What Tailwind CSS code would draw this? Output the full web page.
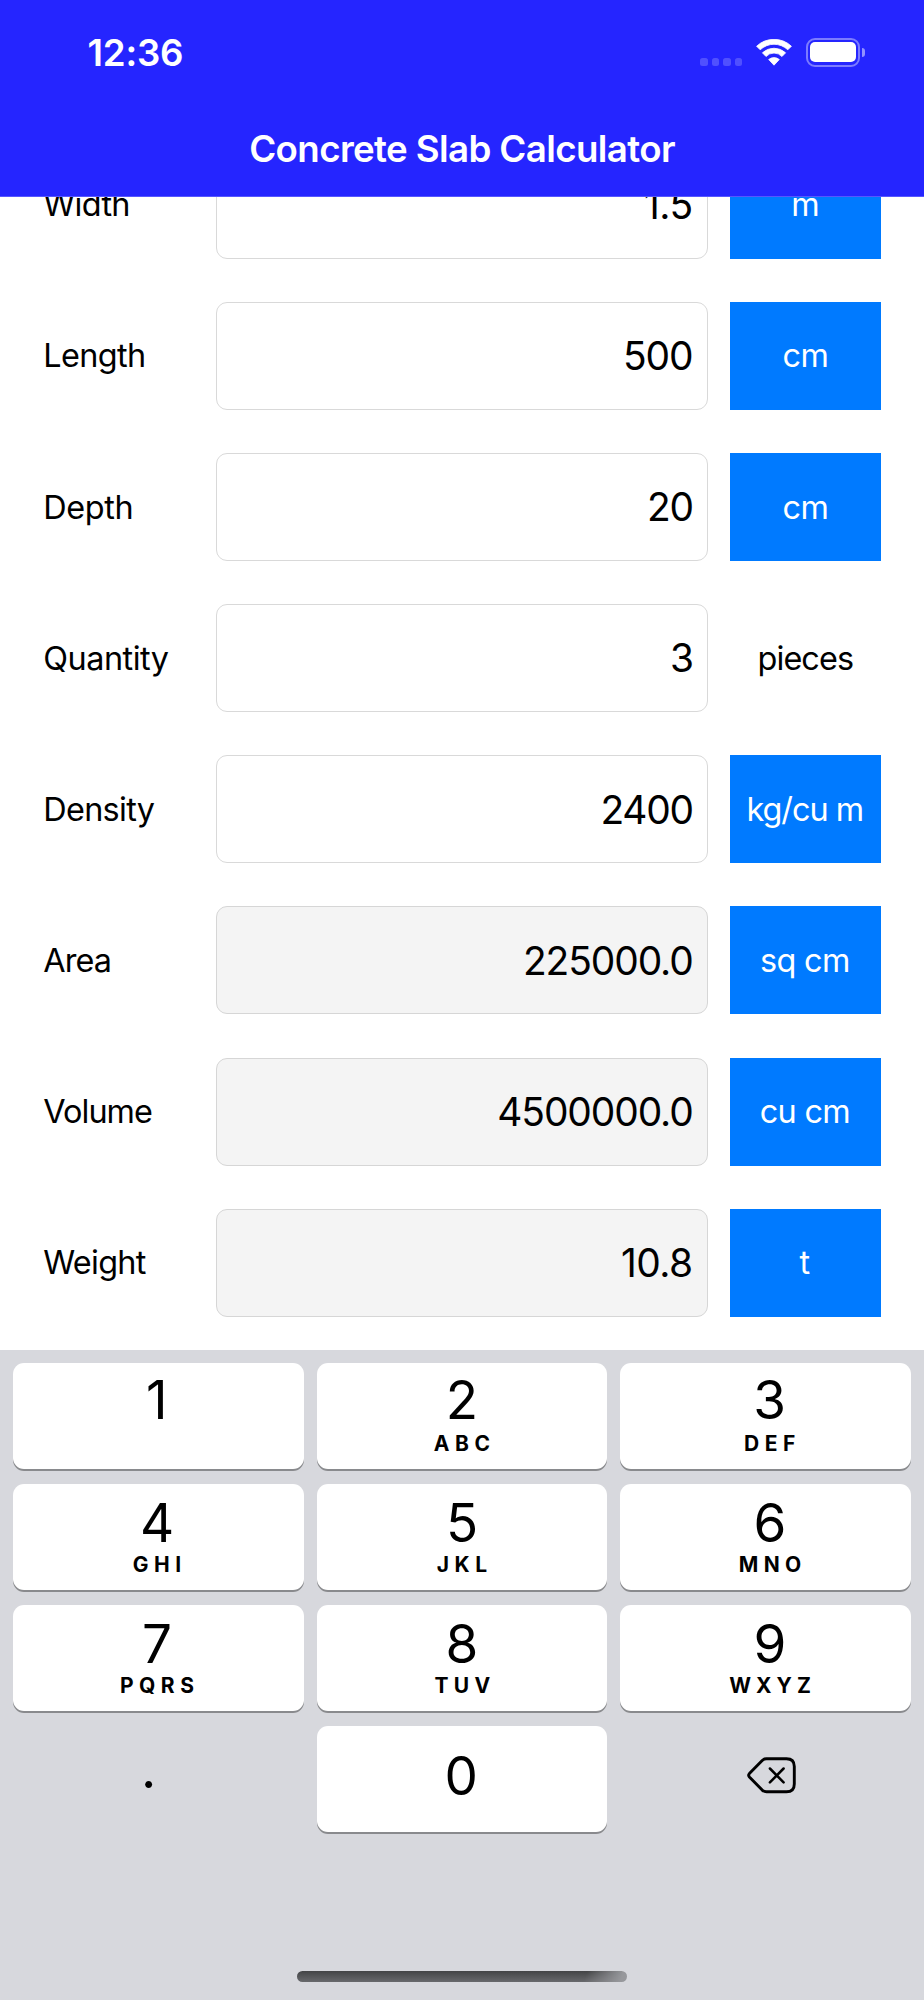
<!DOCTYPE html>
<html lang="en">
<head>
<meta charset="utf-8">
<meta name="viewport" content="width=924">
<title>Concrete Slab Calculator</title>
<script src="https://cdn.jsdelivr.net/npm/@tailwindcss/browser@4"></script>
</head>
<body class="flex h-[2000px] w-[924px] flex-col overflow-hidden bg-white font-['Inter','Liberation_Sans',sans-serif] text-black">

<header class="flex h-[197px] shrink-0 flex-col border-b border-[#5656ff] bg-[#2525ff] text-white">
  <div class="flex h-[105px] justify-between pl-[87.5px] pr-[59px]">
    <div class="pt-[30.5px] text-[36.7px] leading-[44px] font-semibold tracking-[-0.2px]">12:36</div>
    <div class="flex items-start">
      <div class="mt-[58px] flex gap-[3.8px]">
        <span class="h-2 w-[7.7px] rounded-[2.5px] bg-white/20"></span>
        <span class="h-2 w-[7.7px] rounded-[2.5px] bg-white/20"></span>
        <span class="h-2 w-[7.7px] rounded-[2.5px] bg-white/20"></span>
        <span class="h-2 w-[7.7px] rounded-[2.5px] bg-white/20"></span>
      </div>
      <svg class="mt-[39px] ml-[13.7px] h-[27px] w-9" viewBox="0 0 36 27" fill="#fff" stroke="#fff" stroke-width=".8" stroke-linejoin="round">
        <path d="M.6 7.2A25.4 25.4 0 0 1 35.4 7.2L31.8 10.8A20 20 0 0 0 4.2 10.8Z"/>
        <path d="M6.4 13.8A17 17 0 0 1 29.6 13.8L26 17.5A11 11 0 0 0 10 17.5Z"/>
        <path d="M12.7 20.5A8.4 8.4 0 0 1 23.3 20.5L18 26.2Z"/>
      </svg>
      <div class="mt-[38px] ml-3.5 h-[28.5px] w-[54px] rounded-[9px] border-2 border-white/40 p-[2.2px]">
        <div class="h-full w-full rounded-[5px] bg-white"></div>
      </div>
      <div class="mt-[48px] ml-[1.7px] h-[9px] w-[3.3px] rounded-r-full bg-white/50"></div>
    </div>
  </div>
  <h1 class="pt-[22px] text-center text-[36.7px] leading-[44px] font-semibold tracking-[-0.62px]">Concrete Slab Calculator</h1>
</header>

<main class="h-[1153px] shrink-0 overflow-hidden">
  <div class="-mt-[46.5px] flex flex-col gap-[43.2px] pr-[43.2px] pl-[43.3px] text-[32.4px]">
    <div class="flex h-[108px] items-center">
      <label class="w-[172.7px] pt-[2px] tracking-[-0.65px]">Width</label>
      <div class="flex h-full w-[492.3px] items-center justify-end rounded-[11px] border border-[#d9d9d9] pt-[1.5px] pr-[14.5px] text-[38.9px] tracking-[-0.5px]">1.5</div>
      <div class="ml-[21.7px] flex h-full w-[151px] items-center justify-center bg-[#007aff] pt-[2px] tracking-[-0.2px] text-white">m</div>
    </div>
    <div class="flex h-[108px] items-center">
      <label class="w-[172.7px] pt-[2px] tracking-[-0.6px]">Length</label>
      <div class="flex h-full w-[492.3px] items-center justify-end rounded-[11px] border border-[#d9d9d9] pt-[1px] pr-[14.5px] text-[38.9px] tracking-[-1px]">500</div>
      <div class="ml-[21.7px] flex h-full w-[151px] items-center justify-center bg-[#007aff] pt-[2px] tracking-[-0.6px] text-white">cm</div>
    </div>
    <div class="flex h-[108px] items-center">
      <label class="w-[172.7px] pt-[2px] tracking-[-0.35px]">Depth</label>
      <div class="flex h-full w-[492.3px] items-center justify-end rounded-[11px] border border-[#d9d9d9] pt-[1px] pr-[14.5px] text-[38.9px] tracking-[-1.3px]">20</div>
      <div class="ml-[21.7px] flex h-full w-[151px] items-center justify-center bg-[#007aff] pt-[2px] tracking-[-0.6px] text-white">cm</div>
    </div>
    <div class="flex h-[108px] items-center">
      <label class="w-[172.7px] pt-[2px] tracking-[-0.5px]">Quantity</label>
      <div class="flex h-full w-[492.3px] items-center justify-end rounded-[11px] border border-[#d9d9d9] pt-[1px] pr-[14.5px] text-[38.9px] tracking-[-1.3px]">3</div>
      <div class="ml-[21.7px] flex h-full w-[151px] items-center justify-center pt-[2px] tracking-[-0.9px]">pieces</div>
    </div>
    <div class="flex h-[108px] items-center">
      <label class="w-[172.7px] pt-[2px] tracking-[-0.7px]">Density</label>
      <div class="flex h-full w-[492.3px] items-center justify-end rounded-[11px] border border-[#d9d9d9] pt-[1px] pr-[14.5px] text-[38.9px] tracking-[-1.3px]">2400</div>
      <div class="ml-[21.7px] flex h-full w-[151px] items-center justify-center bg-[#007aff] pt-[2px] pr-px tracking-[-1px] text-white">kg/cu m</div>
    </div>
    <div class="flex h-[108px] items-center">
      <label class="w-[172.7px] pt-[2px] tracking-[-0.9px]">Area</label>
      <div class="flex h-full w-[492.3px] items-center justify-end rounded-[11px] border border-[#d6d6d6] bg-[#f4f4f4] pt-[1px] pr-[14.5px] text-[38.9px] tracking-[-1.1px]">225000.0</div>
      <div class="ml-[21.7px] flex h-full w-[151px] items-center justify-center bg-[#007aff] pt-[2px] pr-px tracking-[-0.65px] text-white">sq cm</div>
    </div>
    <div class="flex h-[108px] items-center">
      <label class="w-[172.7px] pt-[2px] tracking-[-0.95px]">Volume</label>
      <div class="flex h-full w-[492.3px] items-center justify-end rounded-[11px] border border-[#d6d6d6] bg-[#f4f4f4] pt-[1px] pr-[14.5px] text-[38.9px] tracking-[-1.1px]">4500000.0</div>
      <div class="ml-[21.7px] flex h-full w-[151px] items-center justify-center bg-[#007aff] pt-[2px] pr-px tracking-[-0.65px] text-white">cu cm</div>
    </div>
    <div class="flex h-[108px] items-center">
      <label class="w-[172.7px] pt-px tracking-[-0.7px]">Weight</label>
      <div class="flex h-full w-[492.3px] items-center justify-end rounded-[11px] border border-[#d6d6d6] bg-[#f4f4f4] pt-[1px] pr-[14.5px] text-[38.9px] tracking-[-0.5px]">10.8</div>
      <div class="ml-[21.7px] flex h-full w-[151px] items-center justify-center bg-[#007aff] pt-px pr-px text-white">t</div>
    </div>
  </div>
</main>

<section class="flex h-[650px] shrink-0 flex-col items-center bg-[#d7d8dd] pt-[12.8px]">
  <div class="grid grid-cols-[290.6px_290.6px_290.6px] grid-rows-[105.8px_105.8px_105.8px_105.8px] gap-x-[12.9px] gap-y-[15.2px] text-[53px] leading-[54px]">
    <div class="rounded-[11px] bg-white pt-[9.8px] pr-[3.4px] text-center shadow-[0_2px_0_#898a8d]">1</div>
    <div class="rounded-[11px] bg-white pt-[9.8px] text-center shadow-[0_2px_0_#898a8d]">2
      <div class="mt-[7.2px] ml-[5.3px] text-[21px] leading-5 font-bold tracking-[5.5px]">ABC</div>
    </div>
    <div class="rounded-[11px] bg-white pt-[9.8px] pl-[8.5px] text-center shadow-[0_2px_0_#898a8d]">3
      <div class="mt-[7.2px] ml-[5.3px] text-[21px] leading-5 font-bold tracking-[5.5px]">DEF</div>
    </div>

    <div class="rounded-[11px] bg-white pt-[12.3px] pr-[3px] text-center shadow-[0_2px_0_#898a8d]">4
      <div class="mt-[4.7px] ml-[5.3px] text-[21px] leading-5 font-bold tracking-[5.5px]">GHI</div>
    </div>
    <div class="rounded-[11px] bg-white pt-[12.3px] text-center shadow-[0_2px_0_#898a8d]">5
      <div class="mt-[4.7px] ml-[5.3px] text-[21px] leading-5 font-bold tracking-[5.5px]">JKL</div>
    </div>
    <div class="rounded-[11px] bg-white pt-[12.3px] pl-[9px] text-center shadow-[0_2px_0_#898a8d]">6
      <div class="mt-[4.7px] ml-[5.3px] text-[21px] leading-5 font-bold tracking-[5.3px]">MNO</div>
    </div>

    <div class="rounded-[11px] bg-white pt-[12.3px] pr-[3px] text-center shadow-[0_2px_0_#898a8d]">7
      <div class="mt-[4.7px] ml-[5.3px] text-[21px] leading-5 font-bold tracking-[5.5px]">PQRS</div>
    </div>
    <div class="rounded-[11px] bg-white pt-[12.3px] text-center shadow-[0_2px_0_#898a8d]">8
      <div class="mt-[4.7px] ml-[5.8px] text-[21px] leading-5 font-bold tracking-[5.3px]">TUV</div>
    </div>
    <div class="rounded-[11px] bg-white pt-[12.3px] pl-[9px] text-center shadow-[0_2px_0_#898a8d]">9
      <div class="mt-[4.7px] ml-[5.3px] text-[21px] leading-5 font-bold tracking-[5.1px]">WXYZ</div>
    </div>

    <div class="pt-[16.5px] pr-[19.6px] text-center">.</div>
    <div class="rounded-[11px] bg-white pt-[23.5px] pr-[1.4px] text-center shadow-[0_2px_0_#898a8d]">0</div>
    <div class="flex justify-center pt-[31.7px] pl-3">
      <svg class="h-[37px] w-[49px]" viewBox="0 0 49 37" fill="none" stroke="#000" stroke-width="2.9" stroke-linecap="round" stroke-linejoin="round">
        <path d="M19.5 1.8H39.5Q47.3 1.8 47.3 9.6V27Q47.3 34.8 39.5 34.8H19.5Q17 34.8 15.2 33.1L2.4 20Q.9 18.3 2.4 16.6L15.2 3.5Q17 1.8 19.5 1.8Z"/>
        <path d="M22.9 11.5L36.6 25.4M36.6 11.5L22.9 25.4" stroke-width="2.5"/>
      </svg>
    </div>
  </div>
  <div class="mt-[139.9px] h-[11px] w-[330.7px] rounded-full bg-[linear-gradient(110deg,transparent_87%,#97989c_98%),linear-gradient(180deg,#434446,#68696c)]"></div>
</section>

</body>
</html>
